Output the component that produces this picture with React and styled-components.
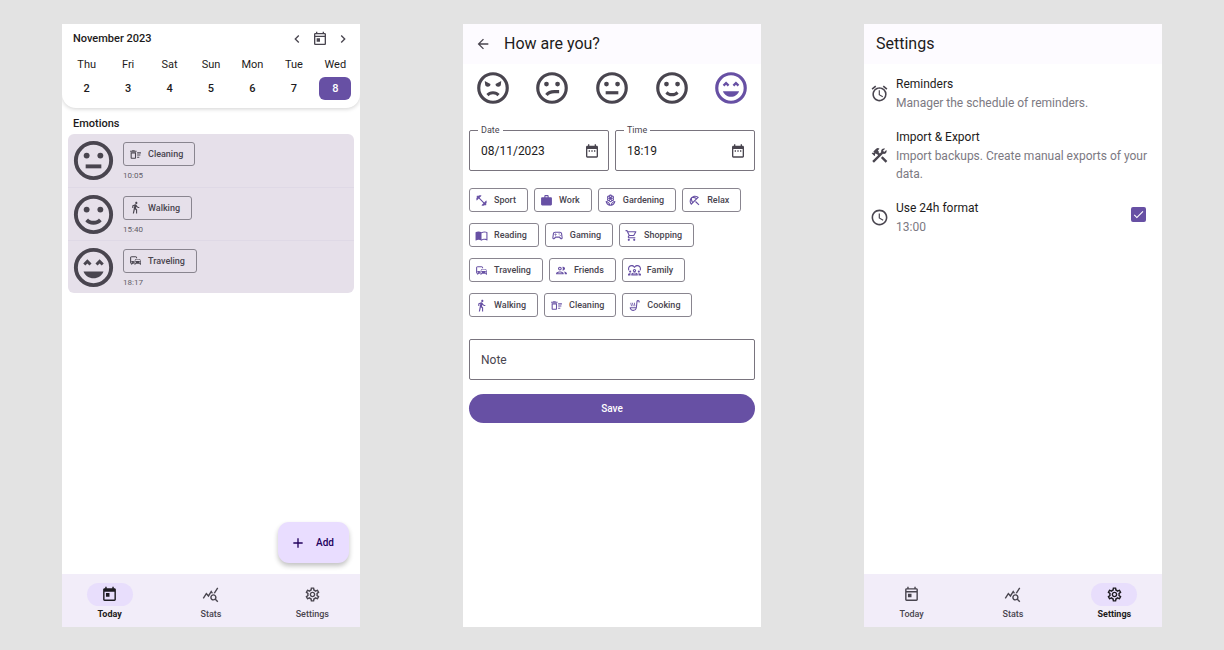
import { useState } from 'react';
import styled, { createGlobalStyle } from 'styled-components';
import {
    MdAdd,
    MdAlarm,
    MdArrowBack,
    MdCheck,
    MdChevronLeft,
    MdChevronRight,
    MdConstruction,
    MdDateRange,
    MdDirectionsWalk,
    MdFitnessCenter,
    MdImportContacts,
    MdOutlineBeachAccess,
    MdOutlineCommute,
    MdOutlineDeleteSweep,
    MdOutlineDiversity1,
    MdOutlineGroup,
    MdOutlineLocalFlorist,
    MdOutlineSettings,
    MdOutlineShoppingCart,
    MdOutlineSoupKitchen,
    MdOutlineSportsEsports,
    MdOutlineToday,
    MdQueryStats,
    MdSchedule,
    MdToday,
    MdWork,
} from 'react-icons/md';

const GlobalStyle = createGlobalStyle`
    * {
        box-sizing: border-box;
    }
    body {
        margin: 0;
        background-color: #e3e3e3;
        color: #1d1b20;
        font-family: Roboto, 'Liberation Sans', sans-serif;
    }
    button, input {
        font-family: inherit;
        color: inherit;
    }
    button {
        cursor: pointer;
    }
`;

const Board = styled.main`
    min-height: 100vh;
    display: grid;
    grid-template-columns: repeat(3, minmax(0, 1fr));
    gap: 103px;
    padding: 24px 62px 23px;
`;

const Phone = styled.section`
    display: flex;
    flex-direction: column;
    min-width: 0;
    background-color: #fff;
`;

const Content = styled.div`
    flex: 1;
`;

/* calendar */
const Calendar = styled.header`
    padding: 4px 4px 8px;
    border-radius: 0 0 14px 14px;
    background-color: #fff;
    box-shadow: 0 1px 4px rgba(0, 0, 0, 0.18);
    clip-path: inset(0 0 -8px 0);
`;

const MonthRow = styled.div`
    display: flex;
    align-items: center;
    justify-content: space-between;
    height: 22px;
    padding: 0 5px 0 7px;
    margin-bottom: 4px;
`;

const Month = styled.h1`
    margin: 0;
    font-size: 11px;
    line-height: 16px;
    font-weight: 500;
`;

const MonthActions = styled.div`
    display: flex;
    align-items: center;
    gap: 7px;
`;

const IconButton = styled.button`
    display: flex;
    padding: 0;
    border: none;
    background: none;
    color: #49454f;
    font-size: 16px;
`;

const Week = styled.div`
    display: grid;
    grid-template-columns: repeat(7, 1fr);
`;

const Day = styled.button`
    display: flex;
    flex-direction: column;
    align-items: center;
    gap: 1px;
    padding: 0;
    border: none;
    background: none;
    font-size: 11px;
    line-height: 23px;
`;

const DayName = styled.span`
    font-size: 11px;
    line-height: 22px;
`;

const DayNumber = styled.span`
    width: 32px;
    border-radius: 6px;
    font-weight: 500;
    background-color: ${({ $active }) => ($active ? '#6750a4' : 'transparent')};
    color: ${({ $active }) => ($active ? '#fff' : 'inherit')};
`;

/* emotions */
const SectionTitle = styled.h2`
    margin: 7px 11px 2px;
    font-size: 11px;
    line-height: 17px;
    font-weight: 500;
`;

const EmotionList = styled.ul`
    margin: 0 6px;
    padding: 0;
    border-radius: 6px;
    list-style: none;
    background-color: #e6e0ea;
`;

const Emotion = styled.li`
    display: flex;
    align-items: center;
    gap: 6px;
    height: 53px;
    padding-left: 2px;
    color: #49454f;

    & + & {
        border-top: 1px solid #dfd9e6;
    }
`;

const EmotionInfo = styled.div`
    display: flex;
    flex-direction: column;
    align-items: flex-start;
    gap: 4px;
    padding-top: 3px;
`;

const Time = styled.time`
    font-size: 8px;
    line-height: 12px;
    color: #625e68;
`;

const Chip = styled.button`
    display: flex;
    align-items: center;
    gap: 6px;
    height: 24px;
    padding: 0 11px 0 5px;
    border: 1px solid #89858f;
    border-radius: 3px;
    background: none;
    color: #49454f;
    font-size: 9px;
    line-height: 12px;
    font-weight: 500;

    svg {
        font-size: 13px;
        color: ${({ $accent }) => ($accent ? '#6750a4' : '#49454f')};
    }
`;

const FaceSvg = styled.svg`
    flex: none;
    display: block;
    width: ${({ $size }) => $size}px;
    height: ${({ $size }) => $size}px;
    fill: currentColor;
`;

const FabRow = styled.div`
    display: flex;
    justify-content: flex-end;
    padding: 0 11px 11px;
`;

const Fab = styled.button`
    display: flex;
    align-items: center;
    gap: 10px;
    height: 41px;
    padding: 0 15px 0 12px;
    border: none;
    border-radius: 11px;
    background-color: #e9ddff;
    color: #22005d;
    font-size: 10px;
    font-weight: 500;
    box-shadow: 0 3px 5px rgba(0, 0, 0, 0.24);

    svg {
        font-size: 16px;
    }
`;

/* bottom navigation */
const Nav = styled.nav`
    display: grid;
    grid-template-columns: repeat(3, 1fr);
    gap: 6px;
    height: 53px;
    padding-top: 9px;
    background-color: #f2edf9;
`;

const NavItem = styled.a`
    display: flex;
    flex-direction: column;
    align-items: center;
    gap: 2px;
    color: ${({ $active }) => ($active ? '#1d1b20' : '#49454f')};
    font-size: 9px;
    line-height: 12px;
    font-weight: ${({ $active }) => ($active ? 700 : 500)};
    text-decoration: none;
`;

const NavIcon = styled.span`
    display: flex;
    align-items: center;
    justify-content: center;
    width: 46px;
    height: 23px;
    border-radius: 12px;
    background-color: ${({ $active }) => ($active ? '#e8defc' : 'transparent')};
    font-size: 17px;
`;

/* entry form */
const TopBar = styled.header`
    display: flex;
    align-items: center;
    gap: 13px;
    height: 40px;
    padding: 0 12px;
    background-color: #fdfbff;
`;

const Title = styled.h1`
    margin: 0;
    font-size: 16px;
    line-height: 20px;
    font-weight: 400;
`;

const Moods = styled.div`
    display: grid;
    grid-template-columns: repeat(5, 1fr);
    justify-items: center;
    padding: 5px 0 21px;
`;

const Mood = styled.button`
    padding: 0;
    border: none;
    background: none;
    color: ${({ $active }) => ($active ? '#6750a4' : '#49454f')};
`;

const Form = styled.form`
    display: flex;
    flex-direction: column;
    padding: 2px 6px;
`;

const FieldRow = styled.div`
    display: grid;
    grid-template-columns: repeat(2, minmax(0, 1fr));
    gap: 6px;
    margin-bottom: 17px;
`;

const Field = styled.div`
    position: relative;
    display: flex;
    align-items: center;
    height: 41px;
    padding: 0 8px 0 11px;
    border: 1px solid #79747e;
    border-radius: 2px;
    color: #49454f;

    svg {
        flex: none;
        font-size: 16px;
    }
`;

const FieldLabel = styled.label`
    position: absolute;
    top: -7px;
    left: 8px;
    padding: 0 3px;
    background-color: #fff;
    font-size: 9px;
    line-height: 12px;
`;

const FieldInput = styled.input`
    flex: 1;
    min-width: 0;
    padding: 0;
    border: none;
    outline: none;
    background: none;
    color: #1d1b20;
    font-size: 12px;
    line-height: 18px;

    &::placeholder {
        color: #49454f;
        opacity: 1;
    }
`;

const Chips = styled.div`
    display: flex;
    flex-wrap: wrap;
    gap: 11px 6px;
    margin-bottom: 22px;
`;

const Save = styled.button`
    height: 29px;
    margin-top: 14px;
    border: none;
    border-radius: 15px;
    background-color: #6750a4;
    color: #fff;
    font-size: 10px;
    font-weight: 500;
`;

/* settings */
const SettingList = styled.div`
    display: flex;
    flex-direction: column;
    gap: 16px;
    padding: 11px 6px;
`;

const Setting = styled.div`
    display: flex;
    align-items: center;
    gap: 7px;
    font-size: 12px;
    line-height: 18px;

    > svg {
        flex: none;
        font-size: 19px;
        color: #49454f;
    }
`;

const SettingText = styled.div`
    flex: 1;
`;

const SettingTitle = styled.label`
    display: block;
    font-size: 12px;
`;

const SettingInfo = styled.p`
    margin: 1px 0 0;
    color: #7c7982;
`;

const CheckWrap = styled.span`
    position: relative;
    display: flex;
    margin: 0 10px 6px 0;
    color: #fff;

    svg {
        position: absolute;
        inset: 1px;
        font-size: 13px;
        pointer-events: none;
    }
`;

const Checkbox = styled.input`
    appearance: none;
    width: 15px;
    height: 15px;
    margin: 0;
    border: 2px solid #6750a4;
    border-radius: 2px;

    &:checked {
        background-color: #6750a4;
    }
`;

const days = [
    ['Thu', 2],
    ['Fri', 3],
    ['Sat', 4],
    ['Sun', 5],
    ['Mon', 6],
    ['Tue', 7],
    ['Wed', 8],
];

const emotions = [
    { mood: 'neutral', label: 'Cleaning', icon: MdOutlineDeleteSweep, time: '10:05' },
    { mood: 'happy', label: 'Walking', icon: MdDirectionsWalk, time: '15:40' },
    { mood: 'excited', label: 'Traveling', icon: MdOutlineCommute, time: '18:17' },
];

const moods = ['angry', 'confused', 'neutral', 'happy', 'excited'];

const activities = [
    { label: 'Sport', icon: MdFitnessCenter },
    { label: 'Work', icon: MdWork },
    { label: 'Gardening', icon: MdOutlineLocalFlorist },
    { label: 'Relax', icon: MdOutlineBeachAccess },
    { label: 'Reading', icon: MdImportContacts },
    { label: 'Gaming', icon: MdOutlineSportsEsports },
    { label: 'Shopping', icon: MdOutlineShoppingCart },
    { label: 'Traveling', icon: MdOutlineCommute },
    { label: 'Friends', icon: MdOutlineGroup },
    { label: 'Family', icon: MdOutlineDiversity1 },
    { label: 'Walking', icon: MdDirectionsWalk },
    { label: 'Cleaning', icon: MdOutlineDeleteSweep },
    { label: 'Cooking', icon: MdOutlineSoupKitchen },
];

const roundEyes = (
    <>
        <circle cx='8.5' cy='9.5' r='1.5' />
        <circle cx='15.5' cy='9.5' r='1.5' />
    </>
);

const faces = {
    angry: (
        <>
            <path d='M6.8 7.6 10.4 9.500a1.700 1.700 0 0 1-3.400 0ZM17.200 7.600 13.600 9.500a1.700 1.700 0 0 0 3.400 0Z' />
            <path d='M12 14c1.75 0 3.29.72 4.19 1.81l-1.42 1.42C14.32 16.5 13.25 16 12 16s-2.32.5-2.77 1.23l-1.42-1.42C8.71 14.72 10.25 14 12 14Z' />
        </>
    ),
    confused: (
        <>
            {roundEyes}
            <path d='M16.5 14.3h-3c-2.3 0-3.9.6-5 2.1' fill='none' stroke='currentColor' strokeWidth='2' />
        </>
    ),
    neutral: (
        <>
            {roundEyes}
            <path d='M8 14h8v2H8Z' />
        </>
    ),
    happy: (
        <>
            {roundEyes}
            <path d='M12 17.23c-1.75 0-3.29-.73-4.19-1.81L9.23 14c.45.72 1.52 1.23 2.77 1.23s2.32-.51 2.77-1.23l1.42 1.42c-.9 1.08-2.44 1.81-4.19 1.81Z' />
        </>
    ),
    excited: (
        <>
            <path d='M8.88 7.82 11 9.94 9.94 11 8.88 9.94 7.82 11 6.76 9.94ZM15.12 7.82 17.24 9.94 16.18 11 15.12 9.94 14.06 11 13 9.94Z' />
            <path d='M12 17.5c2.33 0 4.31-1.46 5.11-3.5H6.89c.8 2.04 2.78 3.5 5.11 3.5Z' />
        </>
    ),
};

const Face = ({ mood, size }) => (
    <FaceSvg viewBox='0 0 24 24' $size={size} aria-hidden='true'>
        <circle cx='12' cy='12' r='9' fill='none' stroke='currentColor' strokeWidth='2' />
        {faces[mood]}
    </FaceSvg>
);

const BottomNav = ({ active }) => {
    const items = [
        { label: 'Today', icon: active === 'Today' ? MdToday : MdOutlineToday },
        { label: 'Stats', icon: MdQueryStats },
        { label: 'Settings', icon: MdOutlineSettings },
    ];

    return (
        <Nav>
            {items.map(({ label, icon: Icon }) => (
                <NavItem key={label} href={`#${label.toLowerCase()}`} $active={label === active}>
                    <NavIcon $active={label === active}>
                        <Icon />
                    </NavIcon>
                    {label}
                </NavItem>
            ))}
        </Nav>
    );
};

const TodayScreen = () => {
    const [selected, setSelected] = useState(8);

    return (
        <Phone>
            <Calendar>
                <MonthRow>
                    <Month>November 2023</Month>
                    <MonthActions>
                        <IconButton aria-label='Previous week'>
                            <MdChevronLeft />
                        </IconButton>
                        <IconButton aria-label='Go to today'>
                            <MdOutlineToday />
                        </IconButton>
                        <IconButton aria-label='Next week'>
                            <MdChevronRight />
                        </IconButton>
                    </MonthActions>
                </MonthRow>
                <Week>
                    {days.map(([name, number]) => (
                        <Day key={number} onClick={() => setSelected(number)}>
                            <DayName>{name}</DayName>
                            <DayNumber $active={number === selected}>{number}</DayNumber>
                        </Day>
                    ))}
                </Week>
            </Calendar>
            <Content>
                <SectionTitle>Emotions</SectionTitle>
                <EmotionList>
                    {emotions.map(({ mood, label, icon: Icon, time }) => (
                        <Emotion key={time}>
                            <Face mood={mood} size={47} />
                            <EmotionInfo>
                                <Chip type='button'>
                                    <Icon />
                                    {label}
                                </Chip>
                                <Time>{time}</Time>
                            </EmotionInfo>
                        </Emotion>
                    ))}
                </EmotionList>
            </Content>
            <FabRow>
                <Fab>
                    <MdAdd />
                    Add
                </Fab>
            </FabRow>
            <BottomNav active='Today' />
        </Phone>
    );
};

const EntryScreen = () => {
    const [mood, setMood] = useState('excited');

    return (
        <Phone>
            <TopBar>
                <IconButton aria-label='Back'>
                    <MdArrowBack />
                </IconButton>
                <Title>How are you?</Title>
            </TopBar>
            <Moods>
                {moods.map((name) => (
                    <Mood key={name} aria-label={name} $active={name === mood} onClick={() => setMood(name)}>
                        <Face mood={name} size={38} />
                    </Mood>
                ))}
            </Moods>
            <Form onSubmit={(e) => e.preventDefault()}>
                <FieldRow>
                    <Field>
                        <FieldLabel htmlFor='date'>Date</FieldLabel>
                        <FieldInput id='date' defaultValue='08/11/2023' />
                        <MdDateRange />
                    </Field>
                    <Field>
                        <FieldLabel htmlFor='time'>Time</FieldLabel>
                        <FieldInput id='time' defaultValue='18:19' />
                        <MdDateRange />
                    </Field>
                </FieldRow>
                <Chips>
                    {activities.map(({ label, icon: Icon }) => (
                        <Chip key={label} type='button' $accent>
                            <Icon />
                            {label}
                        </Chip>
                    ))}
                </Chips>
                <Field>
                    <FieldInput aria-label='Note' placeholder='Note' />
                </Field>
                <Save type='submit'>Save</Save>
            </Form>
        </Phone>
    );
};

const SettingsScreen = () => (
    <Phone>
        <TopBar>
            <Title>Settings</Title>
        </TopBar>
        <Content>
            <SettingList>
                <Setting>
                    <MdAlarm />
                    <SettingText>
                        <SettingTitle as='div'>Reminders</SettingTitle>
                        <SettingInfo>Manager the schedule of reminders.</SettingInfo>
                    </SettingText>
                </Setting>
                <Setting>
                    <MdConstruction />
                    <SettingText>
                        <SettingTitle as='div'>Import &amp; Export</SettingTitle>
                        <SettingInfo>Import backups. Create manual exports of your data.</SettingInfo>
                    </SettingText>
                </Setting>
                <Setting>
                    <MdSchedule />
                    <SettingText>
                        <SettingTitle htmlFor='format24'>Use 24h format</SettingTitle>
                        <SettingInfo>13:00</SettingInfo>
                    </SettingText>
                    <CheckWrap>
                        <Checkbox id='format24' type='checkbox' defaultChecked />
                        <MdCheck />
                    </CheckWrap>
                </Setting>
            </SettingList>
        </Content>
        <BottomNav active='Settings' />
    </Phone>
);

const App = () => {
    return (
        <>
            <GlobalStyle />
            <Board>
                <TodayScreen />
                <EntryScreen />
                <SettingsScreen />
            </Board>
        </>
    );
};

export default App;
